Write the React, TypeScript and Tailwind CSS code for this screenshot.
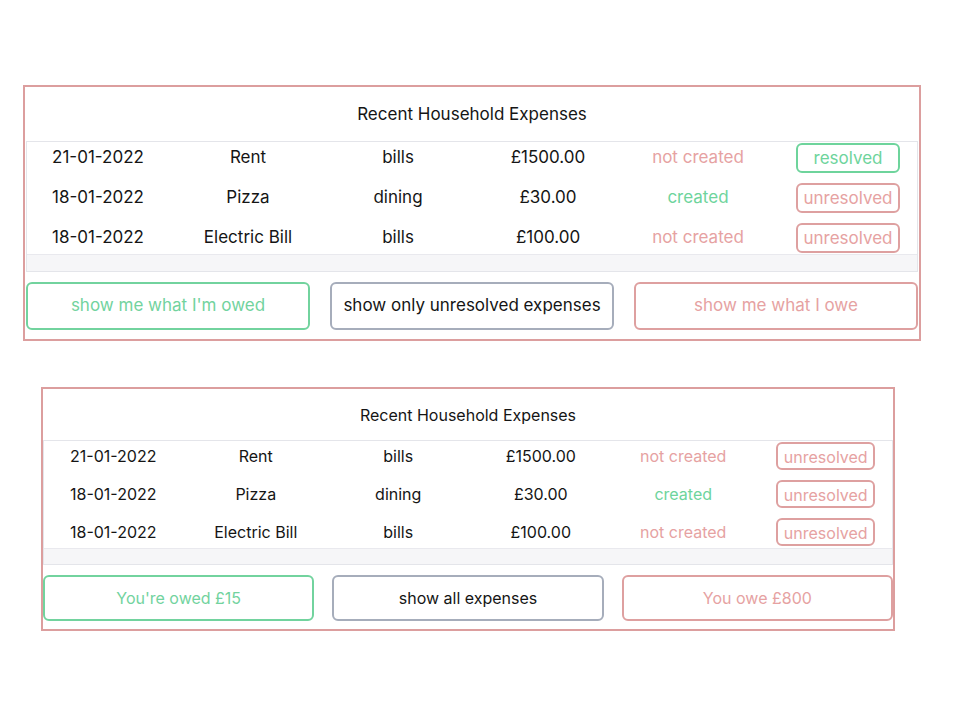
import React from 'react';

type Expense = {
  date: string;
  name: string;
  category: string;
  amount: string;
  created: boolean;
  resolved: boolean;
};

const expenses: Expense[] = [
  { date: '21-01-2022', name: 'Rent', category: 'bills', amount: '£1500.00', created: false, resolved: true },
  { date: '18-01-2022', name: 'Pizza', category: 'dining', amount: '£30.00', created: true, resolved: false },
  { date: '18-01-2022', name: 'Electric Bill', category: 'bills', amount: '£100.00', created: false, resolved: false },
];

// two sizes of the same card: the lower one is the same view at 95%
const sizes = {
  lg: {
    card: 'ml-[23px] w-[898px] px-px pb-[9px]',
    title: 'h-[54px] pt-[2px] text-[17px]',
    grid: 'w-[900px] -ml-[4px] pt-px pb-px gap-y-[10px]',
    row: 'h-[30px] text-[17px]',
    badge: 'w-[104px] h-[30px] text-[17px]',
    strip: 'h-[17px]',
    buttons: 'mt-[10px] gap-[20px]',
    button: 'h-[48px] text-[17px]',
  },
  sm: {
    card: 'ml-[41px] w-[854px] px-0 pb-[8px]',
    title: 'h-[51px] text-[16px]',
    grid: 'w-[855px] -ml-[2px] pt-px pb-[2px] gap-y-[10px]',
    row: 'h-[28px] text-[16px]',
    badge: 'w-[99px] h-[28px] text-[16px]',
    strip: 'h-[16px]',
    buttons: 'mt-[10px] gap-[18px]',
    button: 'h-[46px] text-[16px]',
  },
};

type Size = keyof typeof sizes;

const ExpenseCard = ({ size, expenses, resolvedOverride, buttons }: {
  size: Size;
  expenses: Expense[];
  resolvedOverride?: boolean;
  buttons: [string, string, string];
}) => {
  const s = sizes[size];
  return (
    <div className={`${s.card} border-2 border-[#dc9e9e] bg-white`}>
      <div className={`${s.title} flex items-center justify-center text-[#151515]`}>
        Recent Household Expenses
      </div>

      <div className="border border-[#e4e5ea] overflow-hidden">
        <div className={`${s.grid} grid grid-cols-6`}>
          {expenses.map((e, i) => {
            const resolved = resolvedOverride ?? e.resolved;
            return (
              <React.Fragment key={i}>
                <div className={`${s.row} flex items-center justify-center text-[#151515]`}>{e.date}</div>
                <div className={`${s.row} flex items-center justify-center text-[#151515]`}>{e.name}</div>
                <div className={`${s.row} flex items-center justify-center text-[#151515]`}>{e.category}</div>
                <div className={`${s.row} flex items-center justify-center text-[#151515]`}>{e.amount}</div>
                <div className={`${s.row} flex items-center justify-center ${e.created ? 'text-[#6ed49c]' : 'text-[#e6a2a2]'}`}>
                  {e.created ? 'created' : 'not created'}
                </div>
                <div className={`${s.row} flex items-center justify-center`}>
                  <span
                    className={`${s.badge} flex items-center justify-center pt-[2px] rounded-md border-2 ${
                      resolved ? 'border-[#6ed49c] text-[#6ed49c]' : 'border-[#dea0a0] text-[#e6a2a2]'
                    }`}
                  >
                    {resolved ? 'resolved' : 'unresolved'}
                  </span>
                </div>
              </React.Fragment>
            );
          })}
        </div>
        <div className={`${s.strip} border-t border-[#e9e9ee] bg-[#f6f6f8]`} />
      </div>

      <div className={`${s.buttons} grid grid-cols-3`}>
        <button className={`${s.button} rounded-md border-2 border-[#72d39e] text-[#72d39e] bg-white`}>
          {buttons[0]}
        </button>
        <button className={`${s.button} rounded-md border-2 border-[#a6adbb] text-[#151515] bg-white`}>
          {buttons[1]}
        </button>
        <button className={`${s.button} rounded-md border-2 border-[#dea0a0] text-[#e6a2a2] bg-white`}>
          {buttons[2]}
        </button>
      </div>
    </div>
  );
};

export default function App() {
  return (
    <div className="w-[960px] h-[720px] bg-white pt-[85px] flex flex-col gap-[46px] font-['Inter',sans-serif]">
      <ExpenseCard
        size="lg"
        expenses={expenses}
        buttons={["show me what I'm owed", 'show only unresolved expenses', 'show me what I owe']}
      />
      <ExpenseCard
        size="sm"
        expenses={expenses}
        resolvedOverride={false}
        buttons={["You're owed £15", 'show all expenses', 'You owe £800']}
      />
    </div>
  );
}
